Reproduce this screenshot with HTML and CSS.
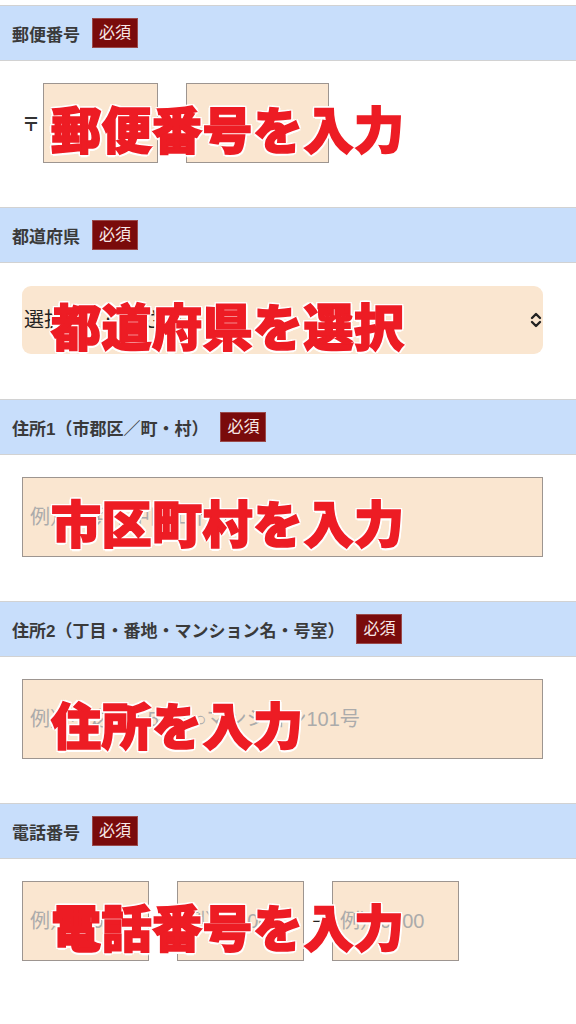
FILE: index.html
```html
<!DOCTYPE html>
<html lang="ja">
<head>
    <meta charset="UTF-8">
    <title>お届け先の入力</title>
    <link rel="stylesheet" href="styles.css">
</head>
<body>
    <div class="form">
        <!-- 郵便番号 -->
        <section class="field">
            <div class="field-head">
                <span class="field-label">郵便番号</span>
                <span class="badge">必須</span>
            </div>
            <div class="field-body">
                <div class="control">
                    <span class="mark">〒</span>
                    <input class="box zip1" type="tel">
                    <span class="sep">−</span>
                    <input class="box zip2" type="tel">
                    <p class="hint">郵便番号を入力</p>
                </div>
            </div>
        </section>

        <!-- 都道府県 -->
        <section class="field">
            <div class="field-head">
                <span class="field-label">都道府県</span>
                <span class="badge">必須</span>
            </div>
            <div class="field-body field-body-select">
                <div class="control">
                    <select class="pref">
                        <option>選択してください</option>
                    </select>
                    <svg class="arrow" width="12" height="16" viewBox="0 0 12 16">
                        <path d="M2 6 L6 2 L10 6 M2 10 L6 14 L10 10" fill="none" stroke="#222" stroke-width="2.4" stroke-linecap="round" stroke-linejoin="round"/>
                    </svg>
                    <p class="hint">都道府県を選択</p>
                </div>
            </div>
        </section>

        <!-- 住所1 -->
        <section class="field">
            <div class="field-head">
                <span class="field-label">住所1（市郡区／町・村）</span>
                <span class="badge">必須</span>
            </div>
            <div class="field-body">
                <div class="control">
                    <input class="box wide" type="text" placeholder="例）横浜市中区山下町">
                    <p class="hint">市区町村を入力</p>
                </div>
            </div>
        </section>

        <!-- 住所2 -->
        <section class="field">
            <div class="field-head">
                <span class="field-label">住所2（丁目・番地・マンション名・号室）</span>
                <span class="badge">必須</span>
            </div>
            <div class="field-body">
                <div class="control">
                    <input class="box wide" type="text" placeholder="例）中之島4-5-6 ○○マンション101号">
                    <p class="hint">住所を入力</p>
                </div>
            </div>
        </section>

        <!-- 電話番号 -->
        <section class="field">
            <div class="field-head">
                <span class="field-label">電話番号</span>
                <span class="badge">必須</span>
            </div>
            <div class="field-body">
                <div class="control">
                    <input class="box tel" type="tel" placeholder="例）090">
                    <span class="sep">−</span>
                    <input class="box tel" type="tel" placeholder="例）0000">
                    <span class="sep">−</span>
                    <input class="box tel" type="tel" placeholder="例）0000">
                    <p class="hint">電話番号を入力</p>
                </div>
            </div>
        </section>
    </div>
</body>
</html>
```

FILE: styles.css
```css
* {
    margin: 0;
    padding: 0;
    box-sizing: border-box;
}
body {
    background-color: #fff;
    font-family: "Liberation Sans", "Noto Sans CJK JP", sans-serif;
    color: #222;
}
.form {
    padding-top: 5px;
}

/* 見出しバー */
.field-head {
    display: flex;
    align-items: center;
    gap: 12px;
    height: 56px;
    padding-left: 12px;
    background-color: #c8defb;
    border-top: 1px solid #d2d2d2;
    border-bottom: 1px solid #d2d2d2;
}
.field-label {
    font-size: 17px;
    font-weight: bold;
    color: #3a3a3a;
}
.badge {
    display: block;
    width: 46px;
    height: 30px;
    line-height: 28px;
    text-align: center;
    font-size: 16px;
    color: #f6e8e8;
    background-color: #7a0b0b;
    border: 1px solid #9a4a4a;
}

/* 入力エリア */
.field-body {
    padding: 22px 33px 44px 22px;
}
.field-body-select {
    padding-top: 23px;
    padding-bottom: 45px;
}
.control {
    position: relative;
    display: flex;
    align-items: center;
}
.mark {
    width: 21px;
    font-size: 18px;
    font-weight: bold;
    color: #333;
}
.sep {
    width: 28px;
    text-align: center;
    font-size: 20px;
    color: #222;
}
.box {
    height: 80px;
    padding: 0 7px;
    font-family: "Liberation Sans", "Noto Sans CJK JP", sans-serif;
    font-size: 20px;
    color: #222;
    background-color: #fae6d0;
    border: 1px solid #9d9590;
    border-radius: 0;
    outline: none;
}
.box::placeholder {
    color: #ababab;
}
.zip1 {
    width: 115px;
}
.zip2 {
    width: 143px;
}
.wide {
    width: 100%;
}
.tel {
    width: 127px;
}

.pref {
    width: 100%;
    height: 68px;
    padding: 0 2px;
    font-family: "Liberation Sans", "Noto Sans CJK JP", sans-serif;
    font-size: 20px;
    color: #222;
    background-color: #fae6d0;
    border: none;
    border-radius: 9px;
    appearance: none;
    -webkit-appearance: none;
    outline: none;
}
.arrow {
    position: absolute;
    right: 1px;
    top: 26px;
}

/* 赤い案内文字（太めに見せるため同色の縁取りを足す） */
.hint {
    position: absolute;
    top: 0;
    bottom: 0;
    left: 29px;
    display: flex;
    align-items: center;
    padding-top: 7px;
    font-family: "Noto Sans CJK JP", sans-serif;
    font-size: 50px;
    font-weight: 900;
    line-height: 1;
    letter-spacing: 0.5px;
    color: #ed1c24;
    -webkit-text-stroke: 1.6px #ed1c24;
    white-space: nowrap;
    pointer-events: none;
    text-shadow: -2.5px 0 #fff, 2.5px 0 #fff, 0 -2.5px #fff, 0 2.5px #fff,
        -2px -2px #fff, 2px -2px #fff, -2px 2px #fff, 2px 2px #fff;
}
```
